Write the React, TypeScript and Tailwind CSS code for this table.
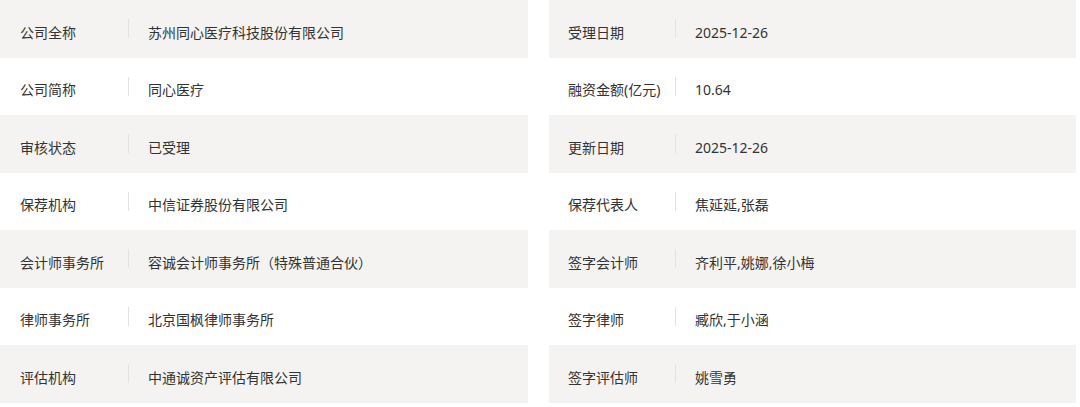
import React from "react";

const left: [string, string][] = [
  ["公司全称", "苏州同心医疗科技股份有限公司"],
  ["公司简称", "同心医疗"],
  ["审核状态", "已受理"],
  ["保荐机构", "中信证券股份有限公司"],
  ["会计师事务所", "容诚会计师事务所（特殊普通合伙）"],
  ["律师事务所", "北京国枫律师事务所"],
  ["评估机构", "中通诚资产评估有限公司"],
];

const right: [string, string][] = [
  ["受理日期", "2025-12-26"],
  ["融资金额(亿元)", "10.64"],
  ["更新日期", "2025-12-26"],
  ["保荐代表人", "焦延延,张磊"],
  ["签字会计师", "齐利平,姚娜,徐小梅"],
  ["签字律师", "臧欣,于小涵"],
  ["签字评估师", "姚雪勇"],
];

function Row({ label, value, idx, wide }: { label: string; value: string; idx: number; wide: boolean }) {
  return (
    <div
      className={`flex items-center h-[57.5px] ${wide ? "pl-[20px]" : "pl-[19.5px]"} ${idx % 2 === 0 ? "bg-[#f4f3f1]" : "bg-white"}`}
    >
      <span className={`${wide ? "w-[108px]" : "w-[107px]"} shrink-0 mt-[7px] whitespace-nowrap`}>{label}</span>
      <span className="w-px h-[19px] bg-[#e3e2e0] shrink-0" />
      <span className="pl-[19px] mt-[7px] whitespace-nowrap">{value}</span>
    </div>
  );
}

export default function App() {
  return (
    <div
      className="w-[1076px] grid grid-cols-2 gap-x-[21px] text-[14px] text-[#333333] bg-white"
      style={{ fontFamily: '"Noto Sans", "Noto Sans CJK SC", sans-serif' }}
    >
      <div className="flex flex-col">
        {left.map(([l, v], i) => (
          <Row key={l} label={l} value={v} idx={i} wide />
        ))}
      </div>
      <div className="flex flex-col">
        {right.map(([l, v], i) => (
          <Row key={l} label={l} value={v} idx={i} wide={false} />
        ))}
      </div>
    </div>
  );
}
